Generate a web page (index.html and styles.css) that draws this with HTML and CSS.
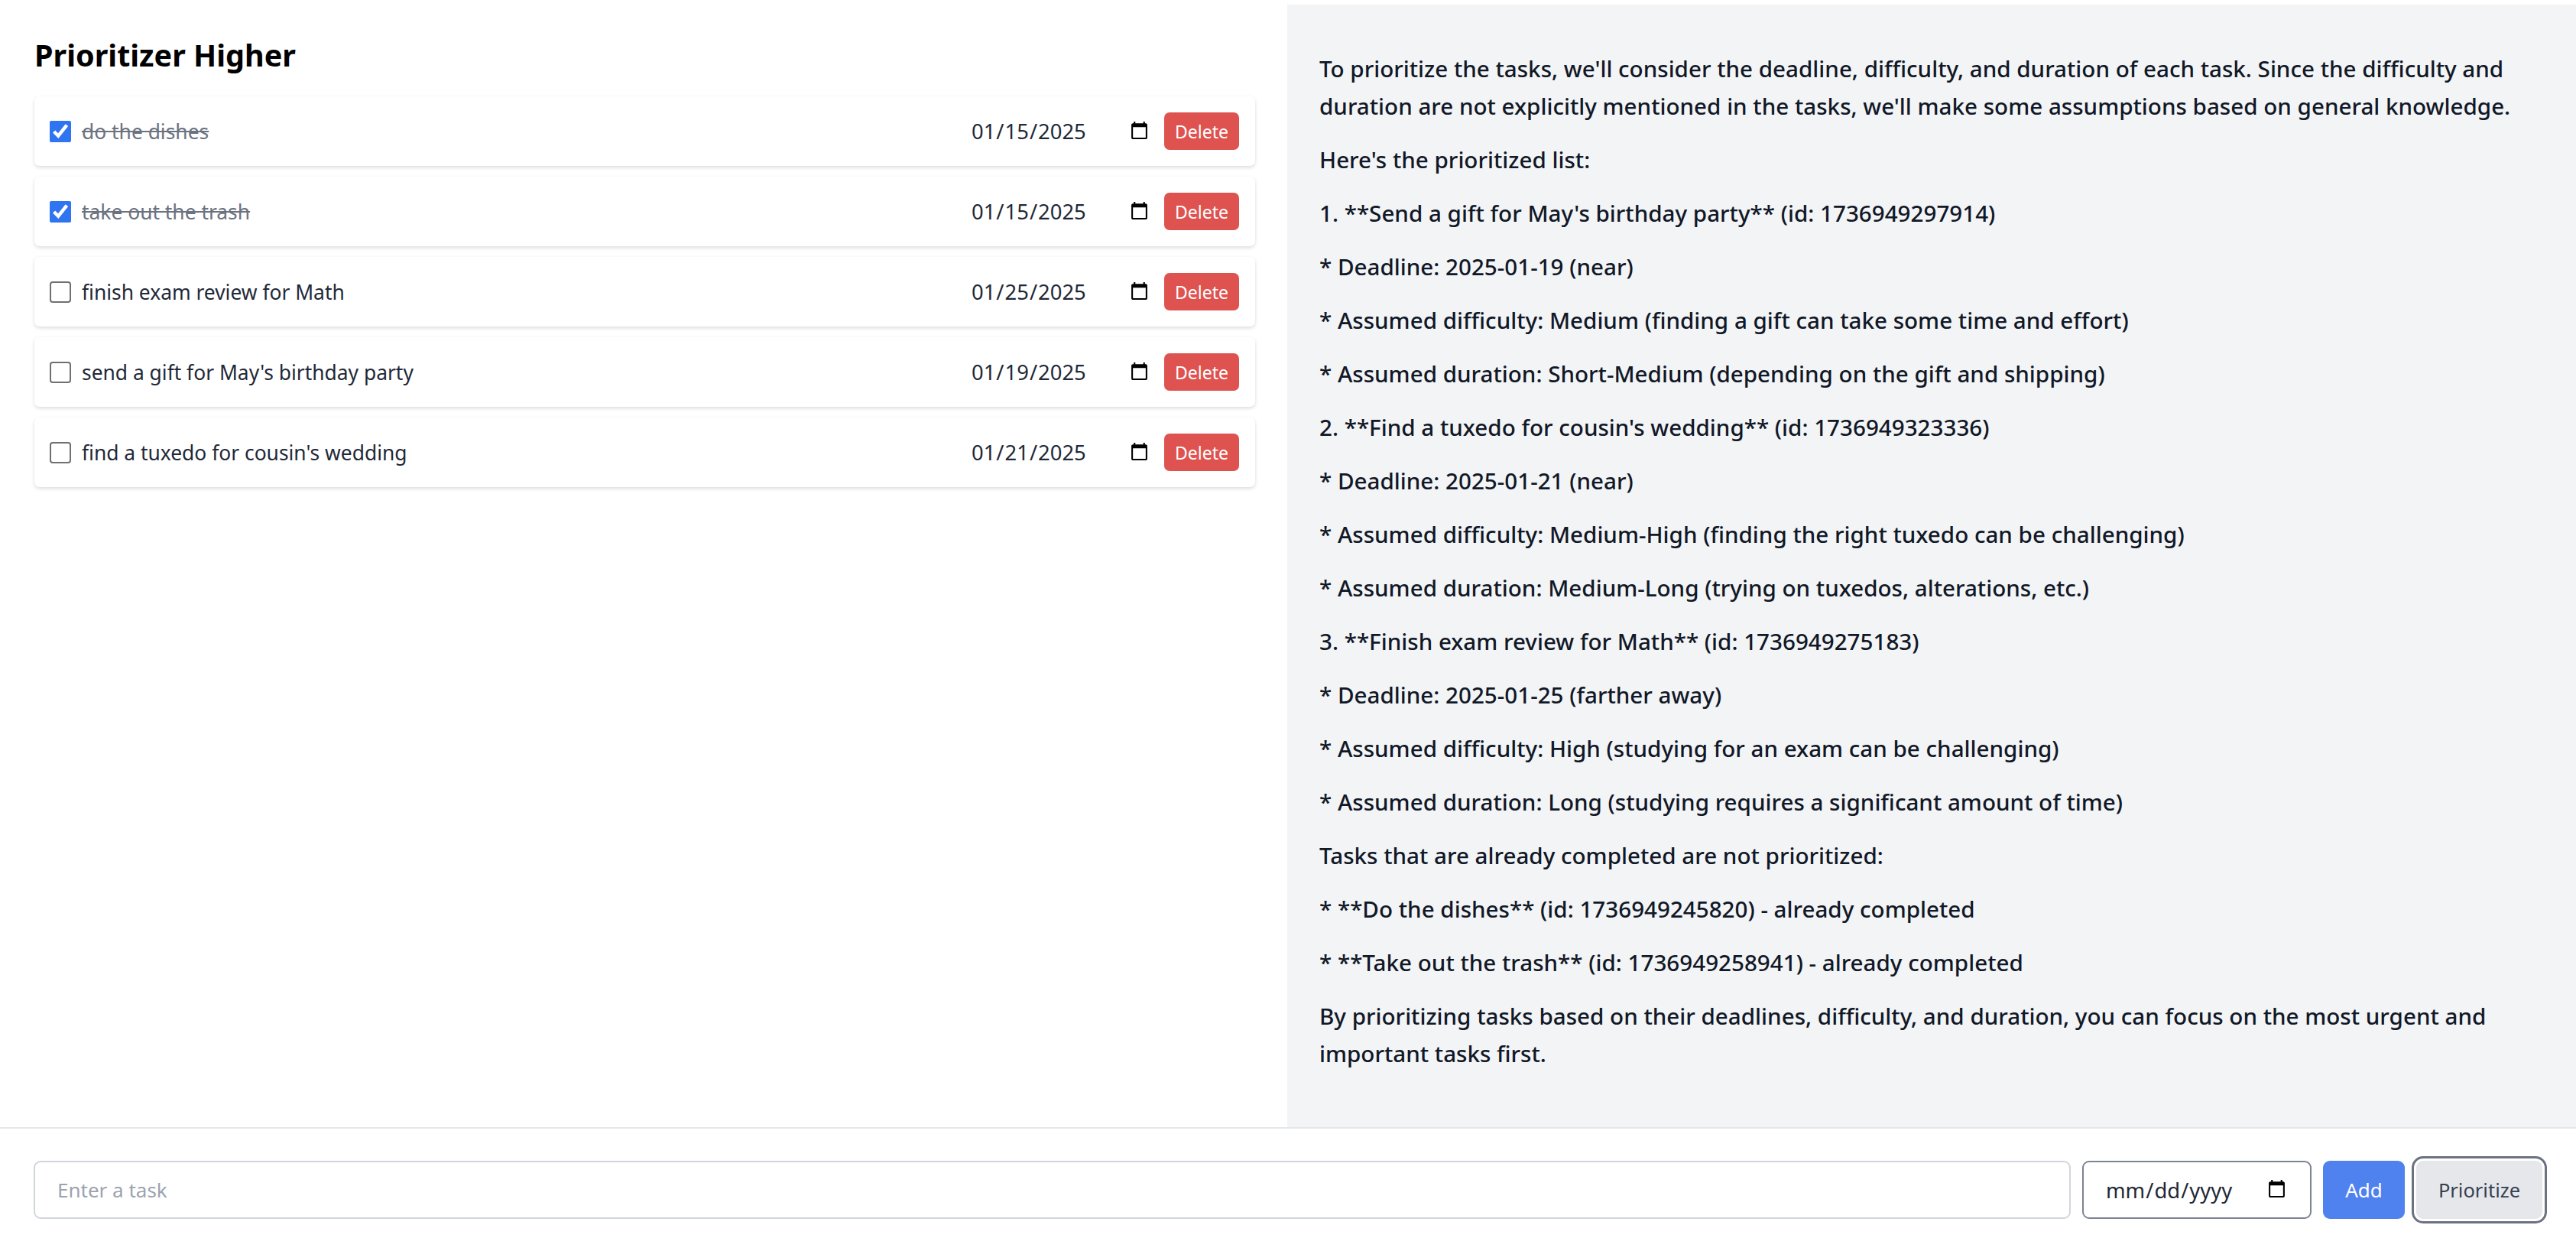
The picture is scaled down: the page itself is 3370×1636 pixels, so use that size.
FILE: index.html
```html
<!DOCTYPE html>
<html lang="en">
<head>
  <meta charset="UTF-8">
  <title>Prioritizer Higher</title>
  <link rel="stylesheet" href="styles.css">
</head>
<body>

<main class="panels">
  <section class="tasks">
    <h1>Prioritizer Higher</h1>
    <ul class="task-list">
      <li class="task done">
        <input type="checkbox" checked>
        <span class="task-name">do the dishes</span>
        <input class="task-date" type="date" value="2025-01-15">
        <button class="delete">Delete</button>
      </li>
      <li class="task done">
        <input type="checkbox" checked>
        <span class="task-name">take out the trash</span>
        <input class="task-date" type="date" value="2025-01-15">
        <button class="delete">Delete</button>
      </li>
      <li class="task">
        <input type="checkbox">
        <span class="task-name">finish exam review for Math</span>
        <input class="task-date" type="date" value="2025-01-25">
        <button class="delete">Delete</button>
      </li>
      <li class="task">
        <input type="checkbox">
        <span class="task-name">send a gift for May's birthday party</span>
        <input class="task-date" type="date" value="2025-01-19">
        <button class="delete">Delete</button>
      </li>
      <li class="task">
        <input type="checkbox">
        <span class="task-name">find a tuxedo for cousin's wedding</span>
        <input class="task-date" type="date" value="2025-01-21">
        <button class="delete">Delete</button>
      </li>
    </ul>
  </section>

  <section class="answer">
    <p>To prioritize the tasks, we'll consider the deadline, difficulty, and duration of each task. Since the difficulty and duration are not explicitly mentioned in the tasks, we'll make some assumptions based on general knowledge.</p>
    <p>Here's the prioritized list:</p>
    <p>1. **Send a gift for May's birthday party** (id: 1736949297914)</p>
    <p>* Deadline: 2025-01-19 (near)</p>
    <p>* Assumed difficulty: Medium (finding a gift can take some time and effort)</p>
    <p>* Assumed duration: Short-Medium (depending on the gift and shipping)</p>
    <p>2. **Find a tuxedo for cousin's wedding** (id: 1736949323336)</p>
    <p>* Deadline: 2025-01-21 (near)</p>
    <p>* Assumed difficulty: Medium-High (finding the right tuxedo can be challenging)</p>
    <p>* Assumed duration: Medium-Long (trying on tuxedos, alterations, etc.)</p>
    <p>3. **Finish exam review for Math** (id: 1736949275183)</p>
    <p>* Deadline: 2025-01-25 (farther away)</p>
    <p>* Assumed difficulty: High (studying for an exam can be challenging)</p>
    <p>* Assumed duration: Long (studying requires a significant amount of time)</p>
    <p>Tasks that are already completed are not prioritized:</p>
    <p>* **Do the dishes** (id: 1736949245820) - already completed</p>
    <p>* **Take out the trash** (id: 1736949258941) - already completed</p>
    <p>By prioritizing tasks based on their deadlines, difficulty, and duration, you can focus on the most urgent and important tasks first.</p>
  </section>
</main>

<form class="add-bar">
  <input class="task-input" type="text" placeholder="Enter a task">
  <input class="new-date" type="date">
  <button class="add" type="button">Add</button>
  <button class="prioritize" type="button">Prioritize</button>
</form>

</body>
</html>
```

FILE: styles.css
```css
* {
  box-sizing: border-box;
}
body {
  margin: 0;
  height: 100vh;
  display: flex;
  flex-direction: column;
  font-family: "Noto Sans", sans-serif;
  background-color: white;
  color: #1f2937;
}
input, button {
  font-family: inherit;
}
.panels {
  flex: 1;
  display: flex;
  min-height: 0;
}
.tasks {
  width: 1684px;
  padding: 42px 42px 0 45px;
}
.tasks h1 {
  margin: 0 0 24px;
  font-size: 39.5px;
  line-height: 60px;
  font-weight: 700;
  color: black;
}
.task-list {
  list-style: none;
  margin: 0;
  padding: 0;
  display: flex;
  flex-direction: column;
  gap: 14px;
}
.task {
  height: 91px;
  display: flex;
  align-items: center;
  padding: 0 21px 0 20px;
  background-color: white;
  border-radius: 7px;
  box-shadow: 0 2px 5px rgba(0, 0, 0, 0.14);
}
.task input[type="checkbox"] {
  width: 28px;
  height: 28px;
  margin: 0 14px 0 0;
  accent-color: #2f74f0;
}
.task input[type="checkbox"]:not(:checked) {
  appearance: none;
  border: 2px solid #6f6f6f;
  border-radius: 4px;
  background-color: white;
}
.task-name {
  flex: 1;
  font-size: 26.4px;
}
.done .task-name {
  color: #6b7280;
  text-decoration: line-through;
}
.task-date {
  width: 236px;
  margin-right: 17px;
  padding: 0;
  border: none;
  background: none;
  font-size: 27.4px;
  color: #1f2937;
}
.delete {
  width: 98px;
  height: 49px;
  border: none;
  border-radius: 7px;
  background-color: #de5350;
  color: white;
  font-size: 23px;
}
.answer {
  flex: 1;
  margin-top: 6px;
  padding: 59px 30px 0 42px;
  background-color: #f3f4f6;
  font-size: 29.6px;
  font-weight: 500;
  line-height: 49px;
  color: #111827;
}
.answer p {
  margin: 0 0 21px;
}
.add-bar {
  height: 162px;
  display: flex;
  align-items: center;
  gap: 15px;
  padding: 0 44px 0 44px;
  border-top: 2px solid #e5e7eb;
}
.task-input {
  flex: 1;
  height: 76px;
  padding: 0 29px;
  border: 2px solid #d1d5db;
  border-radius: 9px;
  font-size: 26px;
}
.task-input::placeholder {
  color: #9ca3af;
}
.new-date {
  width: 300px;
  height: 76px;
  padding: 0 28px;
  border: 2px solid #7d8390;
  border-radius: 9px;
  font-size: 27.4px;
  color: #1f2937;
}
.add {
  width: 107px;
  height: 76px;
  border: none;
  border-radius: 9px;
  background-color: #4f82ef;
  color: white;
  font-size: 26px;
}
.prioritize {
  width: 165px;
  height: 76px;
  border: none;
  border-radius: 9px;
  background-color: #e5e7eb;
  color: #374151;
  font-size: 25.5px;
  outline: 3px solid #6b7280;
  outline-offset: 3px;
}
```
